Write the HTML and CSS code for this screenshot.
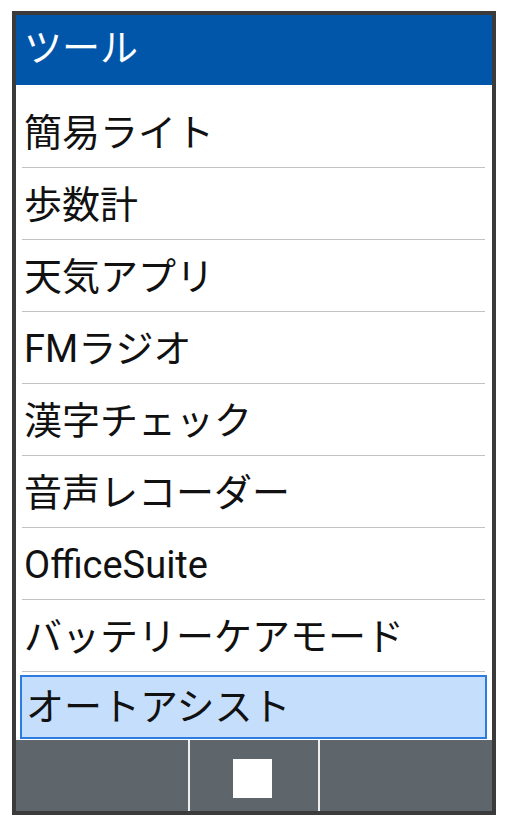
FILE: index.html
```html
<!DOCTYPE html>
<html lang="ja">
<head>
<meta charset="utf-8">
<link rel="stylesheet" href="styles.css">
</head>
<body>
<div class="phone">
  <header class="title-bar">ツール</header>
  <ul class="menu">
    <li class="item">簡易ライト</li>
    <li class="item">歩数計</li>
    <li class="item">天気アプリ</li>
    <li class="item">FMラジオ</li>
    <li class="item">漢字チェック</li>
    <li class="item">音声レコーダー</li>
    <li class="item">OfficeSuite</li>
    <li class="item">バッテリーケアモード</li>
    <li class="item selected">オートアシスト</li>
  </ul>
  <footer class="softkeys">
    <div class="key key-side"></div>
    <div class="key key-center"><span class="stop"></span></div>
    <div class="key key-side"></div>
  </footer>
</div>
</body>
</html>
```
FILE: styles.css
```css
html, body {
  margin: 0;
  padding: 0;
  background: #ffffff;
}
body {
  font-family: "Roboto", "Noto Sans CJK JP", sans-serif;
}
.phone {
  margin: 11px 0 0 12px;
  width: 476px;
  height: 796px;
  border: 4px solid #3b3b3b;
  display: flex;
  flex-direction: column;
  background: #ffffff;
}
.title-bar {
  height: 70px;
  flex: none;
  background: #0156aa;
  color: #ffffff;
  font-size: 38px;
  line-height: 1;
  display: flex;
  align-items: center;
  padding-left: 8px;
  padding-bottom: 4px;
  box-sizing: border-box;
}
.menu {
  list-style: none;
  margin: 0;
  padding: 11px 0 0;
  flex: 1;
  display: flex;
  flex-direction: column;
  overflow: hidden;
}
.item {
  height: 69px;
  flex: none;
  margin: 0 7px 0 6px;
  border-bottom: 1px solid #c2c2c2;
  display: flex;
  align-items: center;
  padding-left: 2px;
  padding-top: 2px;
  font-size: 38px;
  line-height: 1;
  color: #111111;
  white-space: nowrap;
}
.item.selected {
  height: 60px;
  margin: 3px 5px 0 4px;
  padding-left: 4px;
  padding-top: 0;
  border: 2px solid #2b7be0;
  background: #c5defc;
}
.softkeys {
  height: 71px;
  flex: none;
  display: flex;
  background: #5f666b;
}
.key {
  display: flex;
  align-items: center;
  justify-content: center;
}
.key-side {
  width: 172px;
}
.key-center {
  width: 125px;
  border-left: 2px solid #eeeeee;
  border-right: 2px solid #eeeeee;
  padding-top: 6px;
  padding-right: 3px;
}
.stop {
  width: 39px;
  height: 39px;
  background: #ffffff;
}
```
